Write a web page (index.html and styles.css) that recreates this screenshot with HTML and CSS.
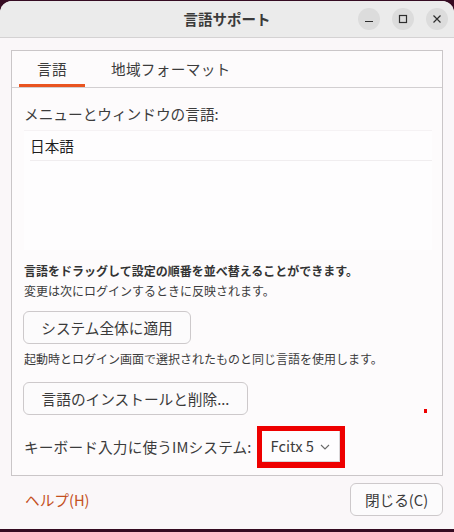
FILE: index.html
```html
<!DOCTYPE html>
<html lang="ja">
<head>
<meta charset="utf-8">
<title>言語サポート</title>
<link rel="stylesheet" href="styles.css">
</head>
<body>
<div class="window">
  <header class="titlebar">
    <div class="title">言語サポート</div>
    <div class="wm">
      <span class="wm-btn"><svg width="10" height="10" viewBox="0 0 10 10"><path d="M1 7.5h8" stroke="#2e2e2e" stroke-width="1.2"/></svg></span>
      <span class="wm-btn"><svg width="10" height="10" viewBox="0 0 10 10"><rect x="1.5" y="1.5" width="7" height="7" fill="none" stroke="#2e2e2e" stroke-width="1.2"/></svg></span>
      <span class="wm-btn"><svg width="10" height="10" viewBox="0 0 10 10"><path d="M1.5 1.5l7 7M8.5 1.5l-7 7" stroke="#2e2e2e" stroke-width="1.2"/></svg></span>
    </div>
  </header>
  <main class="content">
    <section class="notebook">
      <nav class="tabs">
        <div class="tab active">言語</div>
        <div class="tab">地域フォーマット</div>
      </nav>
      <div class="page">
        <div class="label">メニューとウィンドウの言語:</div>
        <div class="list">
          <div class="row">日本語</div>
        </div>
        <div class="hint bold">言語をドラッグして設定の順番を並べ替えることができます。</div>
        <div class="hint">変更は次にログインするときに反映されます。</div>
        <button class="btn btn-apply">システム全体に適用</button>
        <div class="hint hint-gap">起動時とログイン画面で選択されたものと同じ言語を使用します。</div>
        <button class="btn btn-install">言語のインストールと削除...</button>
        <div class="im-row">
          <span class="label">キーボード入力に使うIMシステム:</span>
          <div class="annot">
            <div class="combo">Fcitx 5 <svg class="chev" width="10" height="6" viewBox="0 0 10 6"><path d="M1 1l4 4 4-4" fill="none" stroke="#6a6a6a" stroke-width="1.1"/></svg></div>
          </div>
          <span class="dot"></span>
        </div>
      </div>
    </section>
    <footer class="actions">
      <span class="help">ヘルプ(H)</span>
      <button class="btn btn-close">閉じる(C)</button>
    </footer>
  </main>
</div>
</body>
</html>
```
FILE: styles.css
```css
* { box-sizing: border-box; }
html, body { margin: 0; padding: 0; }
body {
  width: 454px;
  height: 532px;
  background: #350b22;
  overflow: hidden;
  font-family: "Noto Sans CJK JP", "Noto Sans", sans-serif;
  color: #3c3c3c;
}
.window {
  margin-top: 1px;
  height: 528px;
  background: #faf7f9;
  border-radius: 12px 12px 0 0;
  overflow: hidden;
  display: flex;
  flex-direction: column;
}
.titlebar {
  height: 37px;
  background: #ebebeb;
  border-bottom: 1px solid #d4d2d3;
  position: relative;
  display: flex;
  align-items: center;
  justify-content: center;
}
.title {
  font-size: 14.5px;
  font-weight: bold;
  color: #3a3a3a;
  line-height: 20px;
}
.wm {
  position: absolute;
  right: 6px;
  top: 7px;
  display: flex;
  gap: 12px;
}
.wm-btn {
  width: 22px;
  height: 22px;
  border-radius: 50%;
  background: #dcdcdc;
  display: flex;
  align-items: center;
  justify-content: center;
}
.content {
  flex: 1;
  padding: 12px 11px 0 11px;
  display: flex;
  flex-direction: column;
}
.notebook {
  border: 1px solid #cac6c8;
  background: #fdfbfc;
}
.tabs {
  height: 37px;
  border-bottom: 1px solid #d2cfd1;
  display: flex;
  padding-left: 7px;
  gap: 8px;
}
.tab {
  padding: 0 18px;
  font-size: 14.67px;
  line-height: 20px;
  display: flex;
  align-items: center;
  color: #3c3c3c;
  border-bottom: 3px solid transparent;
  padding-top: 3px;
  letter-spacing: 0.3px;
}
.tab.active { border-bottom-color: #e95420; }
.page {
  padding: 16px 10px 7px 12px;
  display: flex;
  flex-direction: column;
  align-items: flex-start;
}
.label {
  font-size: 14.67px;
  line-height: 20px;
  color: #3c3c3c;
}
.list {
  margin-top: 6px;
  align-self: stretch;
  height: 120px;
  background: #fefdfe;
  border-top: 1px solid #f5f2f4;
}
.row {
  margin-left: 6px;
  height: 30px;
  padding-left: 0;
  font-size: 14.67px;
  line-height: 29px;
  color: #1e1e1e;
  border-bottom: 1px solid #f0edef;
}
.hint {
  font-size: 12px;
  line-height: 20px;
  color: #3c3c3c;
}
.hint.bold {
  margin-top: 11px;
  font-weight: bold;
  color: #333;
}
.btn {
  font-family: inherit;
  font-size: 14.67px;
  color: #3a3a3a;
  background: #fcfbfc;
  border: 1px solid #cdc9cb;
  border-radius: 6px;
  height: 33px;
  line-height: 20px;
  padding: 0 17px;
}
.btn-apply { margin-top: 10px; width: 168px; margin-left: -1px; }
.hint-gap { margin-top: 5px; }
.btn-install { margin-top: 13px; width: 225px; margin-left: -1px; }
.im-row {
  margin-top: 11px;
  align-self: stretch;
  display: flex;
  align-items: center;
  gap: 5px;
  position: relative;
}
.im-row .label { letter-spacing: 0.15px; }
.annot {
  border: 5px solid #ee0000;
  border-right-width: 5px;
  border-bottom-width: 6px;
  width: 88px;
  height: 42px;
}
.combo {
  width: 78px;
  height: 31px;
  background: #fefdfe;
  border-right: 1px solid #d9d6d8;
  border-bottom: 1px solid #d9d6d8;
  display: flex;
  align-items: center;
  padding-left: 9px;
  font-size: 14.67px;
  color: #3c3c3c;
  gap: 6px;
  line-height: 20px;
}
.chev { margin-top: 2px; }
.dot {
  position: absolute;
  left: 400px;
  top: -17px;
  width: 3px;
  height: 4px;
  background: #ee0000;
}
.actions {
  display: flex;
  align-items: center;
  justify-content: space-between;
  padding: 7px 0 0 14px;
}
.help {
  font-size: 14.67px;
  line-height: 20px;
  color: #c4501e;
}
.btn-close {
  width: 93px;
  padding: 0;
  height: 33px;
}
```
